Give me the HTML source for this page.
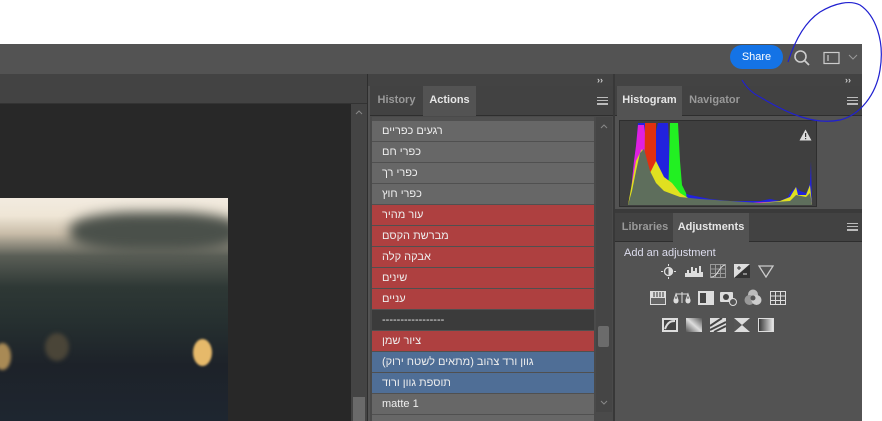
<!DOCTYPE html>
<html style="overflow:hidden;width:882px;height:421px"><head><meta charset="utf-8"><style>
*{margin:0;padding:0;box-sizing:border-box}
body{width:882px;height:421px;background:#fff;position:relative;overflow:hidden;font-family:"Liberation Sans","DejaVu Sans",sans-serif;font-size:11px;color:#ddd}
.a{position:absolute}
.row{position:absolute;left:372px;width:222px;height:20px;line-height:20px;padding-left:10px;color:#eee;font-size:11px}
.g{background:#676767}.r{background:#ae4040}.b{background:#4f6e96}.d{background:#3b3b3b}
.tab{position:absolute;font-weight:bold;font-size:11px;line-height:29px;text-align:center}
.ham{position:absolute;width:11px;height:8px;border-top:1px solid #bbb;border-bottom:1px solid #bbb}
.ham:after{content:"";position:absolute;left:0;right:0;top:2px;height:2px;border-top:1px solid #bbb;border-bottom:1px solid #bbb}
</style></head><body>
<div class="a" style="left:0;top:44px;width:862px;height:30px;background:#535353"></div>
<div class="a" style="left:730px;top:45px;width:53px;height:24px;border-radius:12px;background:#1473e6;color:#fff;font-size:11px;line-height:24px;text-align:center">Share</div>
<svg class="a" style="left:793px;top:49px" width="18" height="18"><circle cx="7.5" cy="7.5" r="5.5" fill="none" stroke="#ccc" stroke-width="1.6"/><line x1="11.5" y1="11.5" x2="16" y2="16" stroke="#ccc" stroke-width="1.8"/></svg>
<svg class="a" style="left:823px;top:51px" width="18" height="14"><rect x="1" y="1.5" width="15" height="11" fill="none" stroke="#ccc" stroke-width="1.2"/><line x1="5" y1="4" x2="5" y2="10" stroke="#ccc" stroke-width="1.2"/></svg>
<svg class="a" style="left:848px;top:54px" width="10" height="6"><polyline points="1,1 5,5 9,1" fill="none" stroke="#999" stroke-width="1"/></svg>
<div class="a" style="left:862px;top:44px;width:20px;height:377px;background:#fff"></div>
<div class="a" style="left:0;top:74px;width:367px;height:30px;background:#434343;border-bottom:1px solid #333"></div>
<div class="a" style="left:0;top:104px;width:351px;height:317px;background:#282828"></div>
<div class="a" style="left:351px;top:104px;width:16px;height:317px;background:#444"></div>
<svg class="a" style="left:355px;top:110px" width="8" height="5"><polyline points="1,4 4,1 7,4" fill="none" stroke="#888"/></svg>
<div class="a" style="left:353px;top:397px;width:12px;height:24px;background:#6a6a6a"></div>
<div class="a" style="left:367px;top:74px;width:1px;height:347px;background:#2e2e2e"></div>
<div class="a" style="left:0;top:198px;width:228px;height:223px;overflow:hidden;background:linear-gradient(180deg,#f2ebe0 0%,#efe6d6 8%,#c8bca8 16%,#5a5e56 26%,#2e3835 40%,#263030 55%,#1d2229 75%,#1e2630 100%)">
<div class="a" style="left:70px;top:14px;width:170px;height:40px;background:#4a504a;filter:blur(6px);border-radius:40%"></div>
</div>
<div class="a" style="left:193px;top:339px;width:19px;height:27px;border-radius:50%;background:#e6b96a;filter:blur(1px)"></div>
<div class="a" style="left:-6px;top:343px;width:17px;height:27px;border-radius:50%;background:#a98a55;filter:blur(1.5px)"></div>
<div class="a" style="left:45px;top:333px;width:24px;height:28px;border-radius:50%;background:#4a4538;filter:blur(2px)"></div>
<div class="a" style="left:368px;top:74px;width:246px;height:347px;background:#535353"></div>
<div class="a" style="left:368px;top:74px;width:246px;height:12px;background:#434343"></div>
<div class="a" style="left:597px;top:74px;font-size:9px;color:#ccc;font-weight:bold;line-height:12px">››</div>
<div class="a" style="left:370px;top:86px;width:244px;height:30px;background:#424242;border-bottom:1px solid #2e2e2e"></div>
<div class="tab" style="left:370px;top:86px;width:53px;height:30px;color:#999">History</div>
<div class="tab" style="left:423px;top:86px;width:53px;height:30px;background:#535353;color:#e6e6e6">Actions</div>
<div class="ham" style="left:597px;top:97px"></div>
<div class="a" style="left:370px;top:116px;width:244px;height:305px;background:#4a4a4a"></div>
<div class="a" style="left:372px;top:117px;width:222px;height:304px;background:#505050;overflow:hidden"></div>
<div class="row g" style="top:121px"><span dir="rtl">רגעים כפריים</span></div>
<div class="row g" style="top:142px"><span dir="rtl">כפרי חם</span></div>
<div class="row g" style="top:163px"><span dir="rtl">כפרי רך</span></div>
<div class="row g" style="top:184px"><span dir="rtl">כפרי חוץ</span></div>
<div class="row r" style="top:205px"><span dir="rtl">עור מהיר</span></div>
<div class="row r" style="top:226px"><span dir="rtl">מברשת הקסם</span></div>
<div class="row r" style="top:247px"><span dir="rtl">אבקה קלה</span></div>
<div class="row r" style="top:268px"><span dir="rtl">שינים</span></div>
<div class="row r" style="top:289px"><span dir="rtl">עניים</span></div>
<div class="row d" style="top:310px">-----------------</div>
<div class="row r" style="top:331px"><span dir="rtl">ציור שמן</span></div>
<div class="row b" style="top:352px"><span dir="rtl">גוון ורד צהוב (מתאים לשטח ירוק)</span></div>
<div class="row b" style="top:373px"><span dir="rtl">תוספת גוון ורוד</span></div>
<div class="row g" style="top:394px">matte 1</div>
<div class="row g" style="top:415px;height:6px"></div>
<div class="a" style="left:596px;top:117px;width:16px;height:295px;background:#454545"></div>
<svg class="a" style="left:600px;top:124px" width="8" height="5"><polyline points="1,4 4,1 7,4" fill="none" stroke="#888"/></svg>
<div class="a" style="left:598px;top:326px;width:11px;height:21px;background:#6b6b6b;border-radius:2px"></div>
<svg class="a" style="left:600px;top:400px" width="8" height="5"><polyline points="1,1 4,4 7,1" fill="none" stroke="#888"/></svg>
<div class="a" style="left:613px;top:74px;width:2px;height:347px;background:#383838"></div>
<div class="a" style="left:615px;top:74px;width:247px;height:347px;background:#535353"></div>
<div class="a" style="left:615px;top:74px;width:247px;height:12px;background:#434343"></div>
<div class="a" style="left:845px;top:74px;font-size:9px;color:#ccc;font-weight:bold;line-height:12px">››</div>
<div class="a" style="left:615px;top:86px;width:247px;height:30px;background:#424242;border-bottom:1px solid #2e2e2e"></div>
<div class="tab" style="left:617px;top:86px;width:65px;height:30px;background:#535353;color:#e6e6e6">Histogram</div>
<div class="tab" style="left:682px;top:86px;width:65px;height:30px;color:#999">Navigator</div>
<div class="ham" style="left:847px;top:97px"></div>
<div class="a" style="left:619px;top:120px;width:198px;height:87px;background:#3f3f3f;border:1px solid #2e2e2e"></div>
<svg class="a" style="left:620px;top:121px" width="196" height="85">
<polygon points="10,84 12,60 14,40 16,25 18,2 32,2 34,20 36,10 38,2 48,2 50,40 54,64 58,70 70,74 90,78 110,80 120,80 140,80 150,78 160,80 168,76 170,72 176,66 180,70 186,72 188,68 190,62 191,40 192,84" fill="#2222dd"/>
<polygon points="10,84 12,60 14,40 16,25 18,4 24,4 26,20 28,30 30,50 34,60 40,70 60,78 80,80 120,82 170,80 176,74 180,76 186,74 190,70 192,84" fill="#e020e0"/>
<polygon points="24,84 25,2 36,2 36,60 34,84" fill="#e03010"/>
<polygon points="48,84 50,2 58,2 60,40 62,64 66,72 68,84" fill="#22f022"/>
<polygon points="8,84 12,62 16,40 22,28 30,52 36,40 44,56 52,62 60,72 70,78 100,82 140,82 160,80 170,76 176,66 178,74 186,74 190,64 192,84" fill="#e0e020"/>
<polygon points="8,84 12,70 16,50 20,32 24,28 30,50 36,62 44,70 60,76 80,78 110,80 140,82 170,80 176,74 186,76 190,72 192,84" fill="#5e6e5c"/>
</svg>
<svg class="a" style="left:799px;top:129px" width="13" height="12"><polygon points="6.5,0.5 12.5,11.5 0.5,11.5" fill="#ddd"/><rect x="6" y="4" width="1.2" height="4" fill="#333"/><rect x="6" y="9" width="1.2" height="1.2" fill="#333"/></svg>
<div class="a" style="left:615px;top:209px;width:247px;height:4px;background:#3a3a3a"></div>
<div class="a" style="left:615px;top:213px;width:247px;height:29px;background:#424242;border-bottom:1px solid #2e2e2e"></div>
<div class="tab" style="left:617px;top:213px;width:56px;height:29px;color:#999">Libraries</div>
<div class="tab" style="left:673px;top:213px;width:76px;height:29px;background:#535353;color:#e6e6e6">Adjustments</div>
<div class="ham" style="left:847px;top:223px"></div>
<div class="a" style="left:624px;top:247px;color:#dde;font-size:11px">Add an adjustment</div>
<svg class="a" style="left:661px;top:264px" width="15" height="15"><circle cx="7.5" cy="7.5" r="4" fill="none" stroke="#ddd" stroke-width="1.3"/><path d="M7.5 3.5a4 4 0 0 1 0 8z" fill="#ddd"/><g stroke="#ddd"><line x1="7.5" y1="0" x2="7.5" y2="2"/><line x1="7.5" y1="13" x2="7.5" y2="15"/><line x1="0" y1="7.5" x2="2" y2="7.5"/><line x1="13" y1="7.5" x2="15" y2="7.5"/></g></svg>
<svg class="a" style="left:685px;top:265px" width="18" height="12"><path d="M0 12V8h2V5h2v3h2V2h2v4h2V3h2v5h2V1h2v6h2v5z" fill="#ddd"/></svg>
<svg class="a" style="left:710px;top:264px" width="16" height="14"><rect x=".5" y=".5" width="15" height="13" fill="none" stroke="#999"/><path d="M5.5 1v12M10.5 1v12M1 5h14M1 9.5h14" stroke="#999"/><path d="M1 13C8 13 9 2 15 1" stroke="#ddd" fill="none"/></svg>
<svg class="a" style="left:734px;top:264px" width="16" height="14"><rect width="16" height="14" fill="#ddd"/><polygon points="16,0 16,14 0,14" fill="#333"/><path d="M3 4h4M5 2v4" stroke="#333"/><path d="M9 10h4" stroke="#ddd"/></svg>
<svg class="a" style="left:758px;top:265px" width="16" height="13"><polygon points="1,1 15,1 8,12" fill="none" stroke="#ccc" stroke-width="1.3"/><polygon points="3,2 13,2 8,10" fill="#555"/></svg>
<svg class="a" style="left:650px;top:291px" width="16" height="14"><rect width="16" height="14" fill="#ddd"/><rect x="1" y="7" width="14" height="6" fill="#666"/><path d="M4 1v5M7 1v5M10 1v5M13 1v5" stroke="#333"/></svg>
<svg class="a" style="left:673px;top:291px" width="18" height="14"><path d="M9 1v11M3 3h12M3 3l-2 6h4zM15 3l-2 6h4z" stroke="#ddd" fill="none"/><circle cx="3" cy="10" r="2.5" fill="#ddd"/><circle cx="15" cy="10" r="2.5" fill="#ddd"/></svg>
<svg class="a" style="left:698px;top:291px" width="16" height="14"><rect x=".5" y=".5" width="15" height="13" fill="#ddd" stroke="#ddd"/><rect x="2" y="2" width="6" height="10" fill="#444"/></svg>
<svg class="a" style="left:720px;top:290px" width="18" height="16"><rect x="0" y="2" width="13" height="10" rx="1" fill="#ddd"/><circle cx="6" cy="7" r="3" fill="#444"/><circle cx="13" cy="12" r="3.5" fill="#555" stroke="#ddd"/></svg>
<svg class="a" style="left:744px;top:289px" width="18" height="16"><circle cx="9" cy="5.5" r="5" fill="#bbb"/><circle cx="5.5" cy="11" r="5" fill="#999"/><circle cx="12.5" cy="11" r="5" fill="#ccc"/><circle cx="9" cy="9" r="2.5" fill="#555"/></svg>
<svg class="a" style="left:770px;top:291px" width="16" height="14"><rect x=".5" y=".5" width="15" height="13" fill="none" stroke="#ddd"/><path d="M5.5 1v12M10.5 1v12M1 5h14M1 9.5h14" stroke="#ddd"/></svg>
<svg class="a" style="left:662px;top:318px" width="16" height="14"><rect width="16" height="14" fill="#ddd"/><rect x="2" y="2" width="12" height="10" fill="#444"/><path d="M3 11C6 3 10 3 13 3" stroke="#ddd" stroke-width="2" fill="none"/></svg>
<svg class="a" style="left:686px;top:318px" width="16" height="14"><defs><linearGradient id="g1" x1="0" y1="1" x2="1" y2="0"><stop offset="0" stop-color="#555"/><stop offset=".5" stop-color="#ddd"/><stop offset="1" stop-color="#555"/></linearGradient></defs><rect width="16" height="14" fill="url(#g1)"/></svg>
<svg class="a" style="left:710px;top:318px" width="16" height="14"><rect width="16" height="14" fill="#ddd"/><path d="M0 12L16 4M0 8L12 0M4 14L16 8" stroke="#444" stroke-width="2"/></svg>
<svg class="a" style="left:734px;top:318px" width="16" height="14"><rect width="16" height="14" fill="#ddd"/><polygon points="0,0 8,7 0,14" fill="#555"/><polygon points="16,0 8,7 16,14" fill="#555"/></svg>
<svg class="a" style="left:758px;top:318px" width="16" height="14"><defs><linearGradient id="g2"><stop offset="0" stop-color="#333"/><stop offset="1" stop-color="#eee"/></linearGradient></defs><rect x=".5" y=".5" width="15" height="13" fill="url(#g2)" stroke="#ddd"/></svg>
<svg class="a" style="left:0;top:0" width="882" height="130"><path d="M788 62C795 40 805 22 820 12C835 3 850 0 860 5C875 15 885 40 880 70C876 95 860 115 840 120C815 125 790 115 760 97C750 92 745 85 742 80" fill="none" stroke="#2020d0" stroke-width="1.2"/></svg>
</body></html>
